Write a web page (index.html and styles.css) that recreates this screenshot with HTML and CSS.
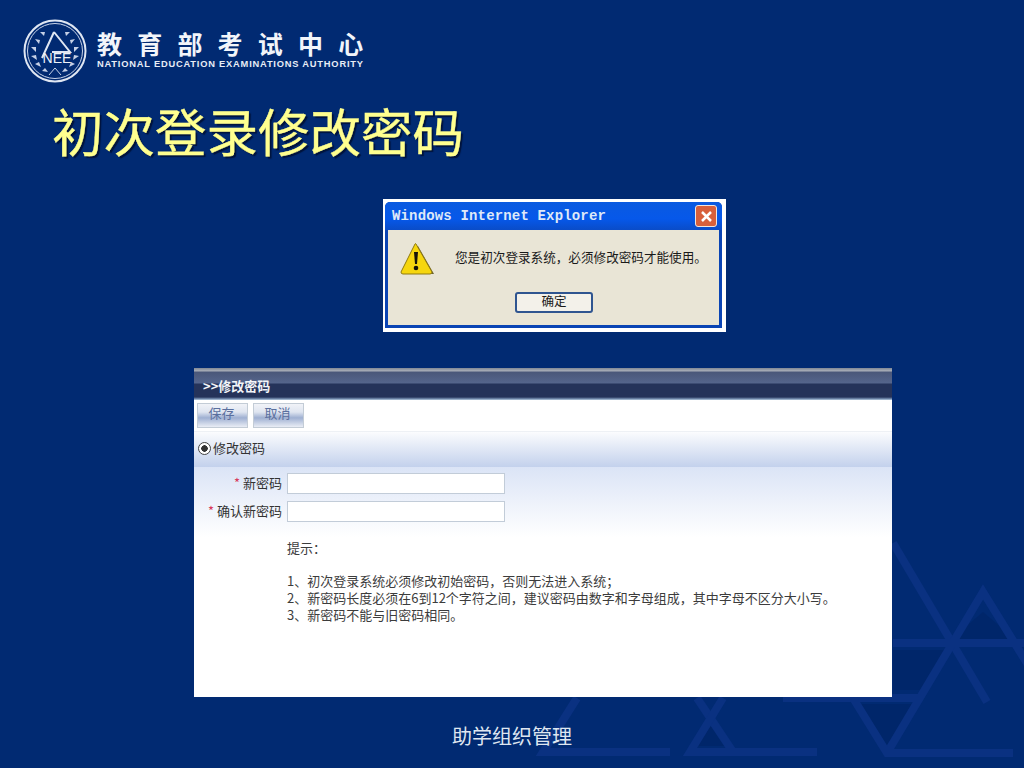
FILE: index.html
```html
<!DOCTYPE html>
<html lang="zh">
<head>
<meta charset="utf-8">
<title>初次登录修改密码</title>
<link rel="stylesheet" href="styles.css">
</head>
<body>
<main class="slide">
  <svg class="backdrop" width="1024" height="768" viewBox="0 0 1024 768">
    <g class="bd-fill">
      <polygon points="983,612 1016,640 950,640"/>
      <polygon points="944,650 893,650 893,690 925,690"/>
      <polygon points="860,704 915,704 887,745"/>
      <polygon points="711,726 696,746 726,746"/>
    </g>
    <g class="bd-line">
      <path d="M893 543L987 702"/>
      <path d="M887 753L983 592L1030 668"/>
      <path d="M893 643H1024"/>
      <path d="M783 698H920"/>
      <path d="M853 698L887 753H1013"/>
      <path d="M697 698L733 752"/>
      <path d="M723 698L690 752H817"/>
      <path d="M577 698L543 752H670"/>
    </g>
  </svg>

  <header class="brand">
    <svg class="emblem" width="64" height="64" viewBox="0 0 64 64">
      <circle class="em-line" cx="32" cy="32" r="30.5"/>
      <circle class="em-thin" cx="32" cy="32" r="27.500"/>
      <path class="em-line" d="M31 13L19 39M31 13L47 33H29"/>
      <g class="em-leaf">
        <path d="M12 20l5 1-1 4zM8 28l5 0 0 5zM8 37l5-1 1 5zM12 45l4-2 2 5zM19 52l3-3 3 4zM52 20l-5 1 1 4zM56 28l-5 0 0 5zM56 37l-5-1-1 5zM52 45l-4-2-2 5zM45 52l-3-3-3 4zM17 13l5 0-1 4zM47 13l-5 0 1 4z"/>
      </g>
      <text class="em-text" x="34" y="44" text-anchor="middle">NEE</text>
      <path class="em-thin" d="M32 49L26 56M32 49L38 56"/>
    </svg>
    <div class="brand-text">
      <div class="brand-cn">教育部考试中心</div>
      <div class="brand-en">NATIONAL EDUCATION EXAMINATIONS AUTHORITY</div>
    </div>
  </header>

  <h1 class="title">初次登录修改密码</h1>

  <section class="dialog">
    <div class="dlg-window">
      <div class="dlg-bar">
        <span class="dlg-title">Windows Internet Explorer</span>
        <span class="dlg-close">
          <svg width="13" height="13" viewBox="0 0 13 13"><path d="M2 2L11 11M11 2L2 11"/></svg>
        </span>
      </div>
      <div class="dlg-body">
        <div class="dlg-msg">
          <svg class="warn" width="36" height="36" viewBox="0 0 36 36">
            <path class="warn-shadow" d="M18 5L34 33H6z"/>
            <path class="warn-tri" d="M16 3L32 31Q32 33 30 33H3Q1 33 1 31L15 3Q15.500 2 16 3z"/>
            <path class="warn-mark" d="M14 11h4l-1 12h-2z"/>
            <circle class="warn-mark" cx="16" cy="27" r="2.300"/>
          </svg>
          <span class="dlg-text">您是初次登录系统，必须修改密码才能使用。</span>
        </div>
        <div class="dlg-actions"><span class="dlg-btn">确定</span></div>
      </div>
    </div>
  </section>

  <section class="panel">
    <div class="pn-head">&gt;&gt;修改密码</div>
    <div class="pn-tools">
      <span class="pn-btn">保存</span>
      <span class="pn-btn">取消</span>
    </div>
    <div class="pn-section"><span class="radio"></span><span class="pn-section-text">修改密码</span></div>
    <div class="pn-form">
      <div class="row"><label class="row-label"><span class="star">*</span> 新密码</label><span class="field"></span></div>
      <div class="row"><label class="row-label"><span class="star">*</span> 确认新密码</label><span class="field"></span></div>
      <div class="notes">
        <p class="note-head">提示：</p>
        <p>1、初次登录系统必须修改初始密码，否则无法进入系统；</p>
        <p>2、新密码长度必须在6到12个字符之间，建议密码由数字和字母组成，其中字母不区分大小写。</p>
        <p>3、新密码不能与旧密码相同。</p>
      </div>
    </div>
  </section>

  <footer class="foot">助学组织管理</footer>
</main>
</body>
</html>
```
FILE: styles.css
```css
* { box-sizing: border-box; }
html, body { margin: 0; padding: 0; }
body { width: 1024px; height: 768px; overflow: hidden; background: #012a72; }

.slide {
  position: relative;
  width: 1024px;
  height: 768px;
  overflow: hidden;
  background: #012a72;
  font-family: "Noto Sans CJK SC", "Liberation Sans", sans-serif;
  display: flex;
  flex-direction: column;
}
.backdrop { position: absolute; left: 0; top: 0; }
.bd-line { fill: none; stroke: #0a3181; stroke-width: 8; }
.bd-fill { fill: #00266a; }

/* brand */
.brand { position: relative; display: flex; height: 62px; margin: 20px 0 0 23px; gap: 10px; flex: none; }
.emblem { flex: none; margin-top: -1px; }
.em-line { fill: none; stroke: #dfe6f2; stroke-width: 2; }
.em-thin { fill: none; stroke: #c8d3e8; stroke-width: 1; }
.em-leaf { fill: #c5d0e6; }
.em-text { fill: #eef2f8; font: 14px "Liberation Sans", sans-serif; }
.brand-text { display: flex; flex-direction: column; padding-top: 10px; }
.brand-cn { color: #f2f5fa; font-size: 25px; line-height: 27px; font-weight: 700; letter-spacing: 15.200px; white-space: nowrap; }
.brand-en { color: #e8edf6; font: 700 9.300px/11px "Liberation Sans", sans-serif; letter-spacing: .8px; margin-top: 2px; white-space: nowrap; }

/* title */
.title {
  position: relative;
  flex: none;
  margin: 15px 0 0 52px;
  color: #ffff8f;
  font-size: 51.500px;
  line-height: 66px;
  font-weight: 400;
  white-space: nowrap;
  text-shadow: 2px 2px 1px #00133c;
  -webkit-text-stroke: .4px #ffff8f;
}

/* dialog */
.dialog {
  position: relative;
  flex: none;
  width: 343px;
  height: 133px;
  margin: 36px 0 0 383px;
  background: #fff;
  padding: 3px 4px 4px 2px;
}
.dlg-window {
  height: 100%;
  background: #0a44b4;
  border-radius: 5px 5px 0 0;
  padding: 0 3px 3px;
  display: flex;
  flex-direction: column;
}
.dlg-bar {
  height: 28px;
  flex: none;
  display: flex;
  align-items: center;
  justify-content: space-between;
  background: linear-gradient(#0a5ae0, #0658ea 60%, #0a4cc8);
  margin: 0 -3px;
  padding: 0 5px 0 7px;
  border-radius: 5px 5px 0 0;
}
.dlg-title { color: #dfe9f8; font: 700 14px/16px "Liberation Mono", monospace; letter-spacing: .16px; white-space: nowrap; }
.dlg-close {
  width: 22px;
  height: 22px;
  display: flex;
  align-items: center;
  justify-content: center;
  background: #d8603c;
  border: 1px solid #f0e6e0;
  border-radius: 3px;
}
.dlg-close path { stroke: #fff; stroke-width: 2.500; fill: none; }
.dlg-body { flex: 1; background: #e9e5d6; display: flex; flex-direction: column; }
.dlg-msg { display: flex; align-items: center; height: 60px; padding: 0 0 3px 12px; }
.warn { flex: none; margin-right: 19px; }
.warn-shadow { fill: #6b6333; }
.warn-tri { fill: #f6d60e; stroke: #8f7a10; stroke-width: 1; }
.warn-mark { fill: #15130a; }
.dlg-text { color: #1a1a1a; font-size: 12.600px; line-height: 18px; padding-bottom: 3px; white-space: nowrap; }
.dlg-actions { display: flex; padding: 2px 0 0 127px; }
.dlg-btn {
  width: 78px;
  height: 21px;
  display: flex;
  align-items: center;
  justify-content: center;
  background: #f3f1ea;
  border: 2px solid #2f5590;
  border-radius: 3px;
  color: #1a1a1a;
  font-size: 12.500px;
  line-height: 16px;
  padding-bottom: 3px;
}

/* panel */
.panel {
  position: relative;
  flex: none;
  width: 698px;
  height: 329px;
  margin: 36px 0 0 194px;
  background: #fff;
  color: #444;
  font-size: 13px;
  line-height: 17px;
}
.pn-head {
  height: 32px;
  padding: 8px 0 0 9px;
  color: #f2f4f8;
  font-weight: 700;
  font-size: 13px;
  line-height: 20px;
  background: linear-gradient(#7f8795 0, #a9aeb8 3px, #4a5779 4px, #55658c 15px, #25335a 16px, #25335a 29px, #7a93b5 31px, #b9cde0 32px);
}
.pn-tools { height: 32px; display: flex; gap: 5px; padding: 3px 0 0 3px; border-bottom: 1px solid #eef1f5; }
.pn-btn {
  width: 51px;
  height: 25px;
  padding: 0 2px 6px 0;
  display: flex;
  align-items: center;
  justify-content: center;
  border: 1px solid #c3ccd6;
  color: #5a6f9e;
  background: linear-gradient(#f1f3f8, #dfe5f0 35%, #9fb0d2 60%, #e9edf5);
}
.pn-section {
  height: 35px;
  display: flex;
  align-items: center;
  gap: 2px;
  padding-left: 4px;
  color: #333;
  background: linear-gradient(#fbfcfe, #c3d1ec);
}
.pn-section-text { padding-bottom: 4px; }
.radio {
  width: 13px;
  height: 13px;
  margin-bottom: 2px;
  border-radius: 50%;
  border: 1px solid #444;
  background: radial-gradient(circle, #333 0 3px, #fff 3.500px);
}
.pn-form {
  padding-top: 6px;
  height: 230px;
  background: linear-gradient(#dbe4f6, #fff 70px);
}
.row { display: flex; height: 21px; margin-bottom: 7px; align-items: center; }
.row-label { width: 88px; padding-bottom: 2px; text-align: right; color: #333; white-space: nowrap; }
.star { color: #d8385a; }
.field {
  width: 218px;
  height: 21px;
  margin-left: 5px;
  background: #fff;
  border: 1px solid #c2ccd8;
}
.notes { padding: 10px 0 0 93px; color: #3c3c3c; white-space: nowrap; }
.notes p { margin: 0; }
.notes .note-head { margin-bottom: 16px; }

/* footer */
.foot {
  position: absolute;
  left: 452px;
  top: 722px;
  color: #dfe6f0;
  font-size: 20px;
  line-height: 27px;
  white-space: nowrap;
}
```
